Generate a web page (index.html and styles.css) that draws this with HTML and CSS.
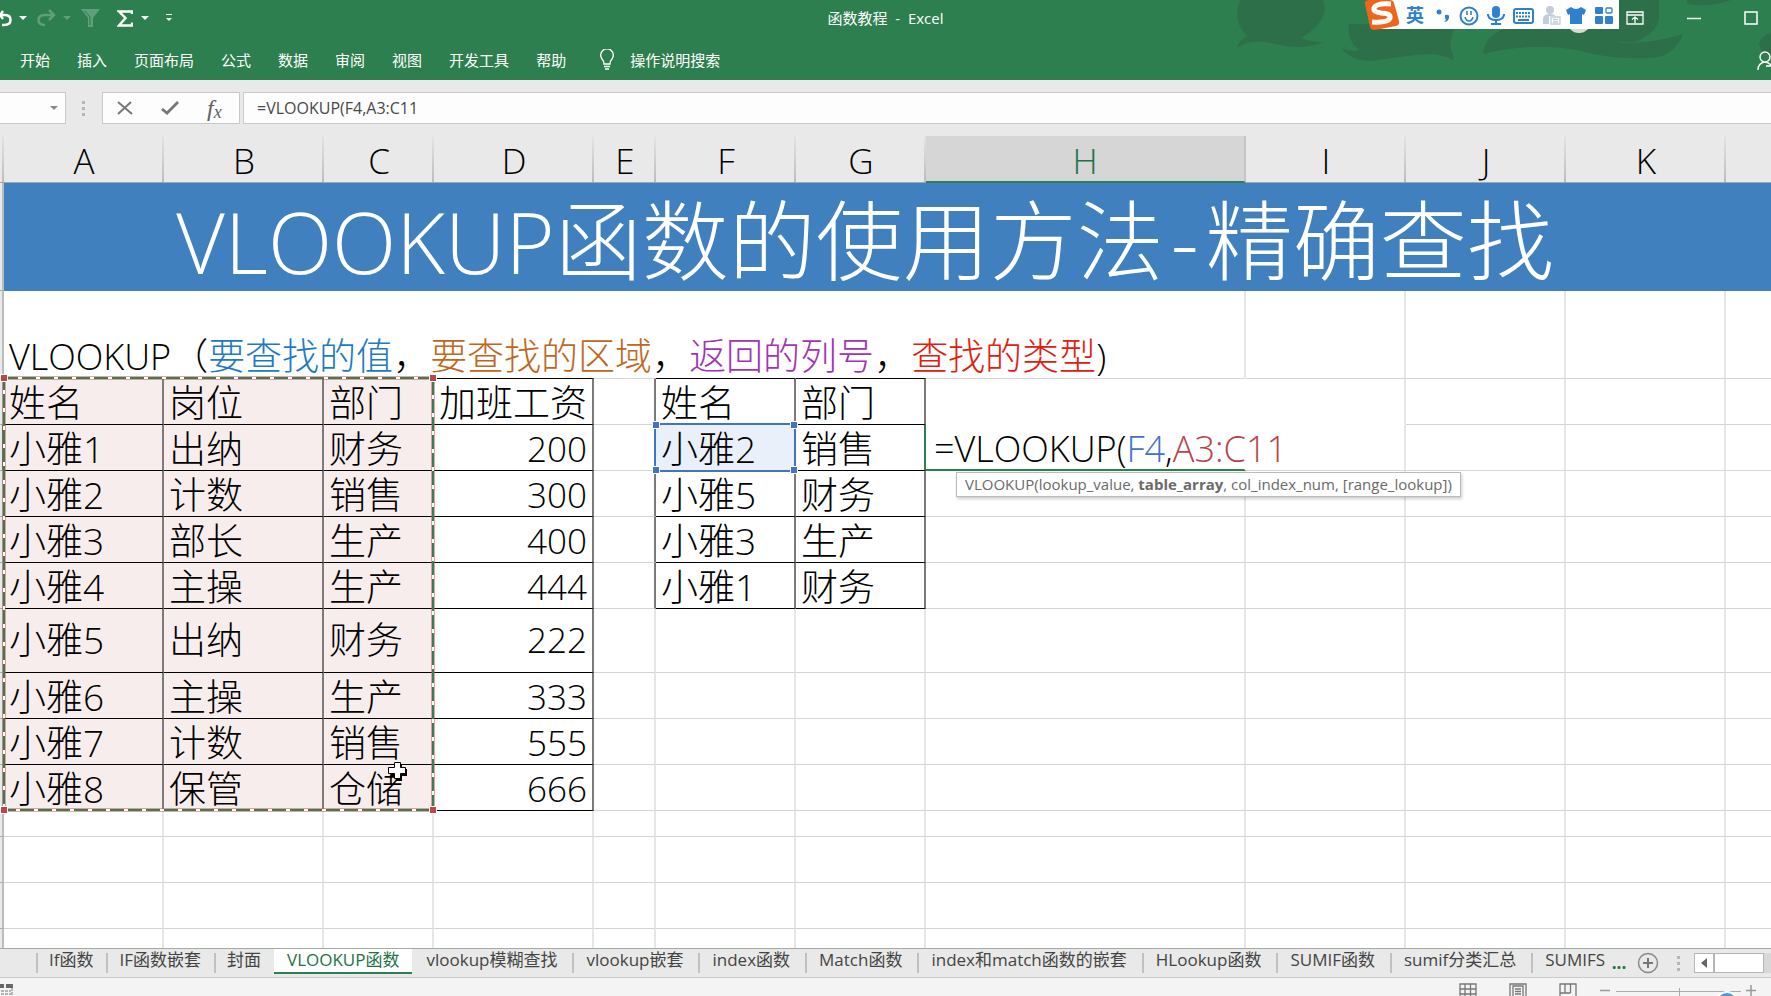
FILE: index.html
```
<!DOCTYPE html>
<html lang="zh-CN">
<head>
<meta charset="utf-8">
<title>函数教程 - Excel</title>
<link rel="stylesheet" href="styles.css">
</head>
<body>
<header class="top">
  <svg class="swirls" width="540" height="80" viewBox="0 0 540 80" aria-hidden="true">
    <path d="M10 0C4 10 4 24 16 36Q8 40 6 48Q16 40 36 42Q70 52 92 42Q78 42 70 38Q100 20 92 0Z"/>
    <path d="M118 24C116 34 120 44 128 50Q118 52 111 48Q118 60 140 61Q160 58 185 55Q208 52 222 60V52Q216 50 224 26Z"/>
    <path d="M252 54Q254 34 276 28H418Q412 40 386 43Q420 44 452 34Q444 56 420 58Q380 60 346 50Q300 42 252 54Z"/>
    <path d="M400 0H428V20Q424 34 404 42H360V0Z"/>
    <path d="M540 32Q520 42 534 54L540 56Z"/>
    <path d="M456 0H500Q480 8 456 4Z"/>
  </svg>
  <div class="titlebar">
    <div class="qat">
      <button class="ico" aria-label="撤消"><svg width="12" height="18" viewBox="0 0 12 18"><path d="M0 6H5Q10.500 6 10.500 11T4 16H2M3 2L0 6L3 10" fill="none" stroke="#fff" stroke-width="2.500"/></svg></button>
      <i class="caret c1"></i>
      <button class="ico redo" aria-label="恢复"><svg width="19" height="18" viewBox="0 0 19 18"><path d="M17 6H8Q1.500 6 1.500 11T8 16M12 1L17 6L12 11" fill="none" stroke="#5f9f7a" stroke-width="2.500"/></svg></button>
      <i class="caret dim"></i>
      <button class="ico filter" aria-label="筛选"><svg width="19" height="18" viewBox="0 0 19 18"><path d="M0 0H19L12 9V18H7V9Z" fill="#5f9f7a"/><path d="M4 2L9 8V16" stroke="#2e7f4f" fill="none"/></svg></button>
      <button class="ico sum" aria-label="自动求和"><svg width="16" height="17" viewBox="0 0 16 17"><path d="M15 4V1.500H2L8.500 8L2 15.500H15V12.500" fill="none" stroke="#fff" stroke-width="2.400"/></svg></button>
      <i class="caret c2"></i>
      <button class="ico more" aria-label="自定义快速访问工具栏"><svg width="6" height="8" viewBox="0 0 6 8"><path d="M0 0H6V1H0ZM0 4H6L3 7Z" fill="#fff"/></svg></button>
    </div>
    <div class="doc">函数教程&nbsp; -&nbsp; Excel</div>
    <div class="win">
      <button class="ico" aria-label="功能区显示选项"><svg width="18" height="14" viewBox="0 0 18 14"><path d="M1 1H17V13H1ZM1 4H17M9 12V6M6 8.500L9 6L12 8.500" fill="none" stroke="#fff" stroke-width="1.300"/></svg></button>
      <button class="ico" aria-label="最小化"><svg width="14" height="14" viewBox="0 0 14 14"><path d="M0 7.500H14" stroke="#fff" stroke-width="1.500"/></svg></button>
      <button class="ico" aria-label="最大化"><svg width="14" height="14" viewBox="0 0 14 14"><path d="M1 1H13V13H1Z" fill="none" stroke="#fff" stroke-width="1.500"/></svg></button>
    </div>
  </div>
  <nav class="ribbon">
    <button>开始</button><button>插入</button><button>页面布局</button><button>公式</button><button>数据</button><button>审阅</button><button>视图</button><button>开发工具</button><button>帮助</button>
    <button class="tell"><svg width="16" height="21" viewBox="0 0 16 21"><path d="M5 15Q5 12 3 10A6.300 6.300 0 1 1 13 10Q11 12 11 15ZM5 17.500H11M6 20H10" fill="none" stroke="#fff" stroke-width="1.400"/></svg>操作说明搜索</button>
    <button class="share" aria-label="共享"><svg width="14" height="19" viewBox="0 0 14 19"><circle cx="8" cy="6" r="5" fill="none" stroke="#fff" stroke-width="1.400"/><path d="M1 19Q1 12 8 11Q11 11 14 14M9 15H14" fill="none" stroke="#fff" stroke-width="1.400"/></svg></button>
  </nav>
  <div class="avatar"></div>
  <div class="ime">
    <svg width="256" height="30" viewBox="0 0 256 30" aria-hidden="true">
      <path d="M8 0H256V29H8Z" fill="#fff"/>
      <path d="M2 4Q1 1 5 0H27Q30 0 31 3L36 21Q37 25 33 26L12 30Q8 30 7 27Z" fill="#ee651b"/>
      <path d="M28 4Q13 3 11 8Q10 12 18 13Q28 13 27 18Q25 23 9 22" fill="none" stroke="#fff" stroke-width="5"/>
      <g fill="#2f81cf">
        <circle cx="76" cy="12" r="2.500"/><path d="M82 15Q87 14 86 18Q85 22 81 22Q84 20 82 18Z"/>
        <rect x="129" y="6" width="8" height="12" rx="4"/><path d="M125 14V15Q126 20 133 20T141 15V14" fill="none" stroke="#2f81cf" stroke-width="2"/><path d="M132 20H134V23H138V25H128V23H132Z"/>
        <path d="M208 7Q213 11 218 7L223 10L221 15L219 14V24H207V14L205 15L203 10Z"/>
        <rect x="232" y="7" width="8" height="7" rx="1"/><rect x="232" y="16" width="8" height="8" rx="1"/><rect x="242" y="16" width="8" height="8" rx="1"/>
      </g>
      <g fill="none" stroke="#2f81cf" stroke-width="2">
        <circle cx="106" cy="16" r="8.500"/><path d="M102 17Q103 21 106 21T110 17M104 11V15M108 11V15" stroke-width="1.600"/>
        <rect x="151" y="9" width="19" height="14" rx="2"/><path d="M153 13H168M153 16.500H168" stroke-dasharray="2 1"/><path d="M155 20H166"/>
        <rect x="243" y="8" width="6" height="5" rx="1" stroke-width="1.300"/>
      </g>
      <g fill="#c3cddd"><circle cx="187" cy="10" r="4"/><path d="M180 24V18Q181 14 187 14Q192 14 192 16H186V24Z"/><path d="M188 17H197V24H188ZM190 19.500H195M190 22H195" fill="#fff" stroke="#c3cddd" stroke-width="1.300"/></g>
    </svg>
    <b>英</b>
  </div>
</header>

<section class="fbar">
  <div class="namebox"><button aria-label="名称框"><i class="caret gray"></i></button></div>
  <div class="grip"><i></i><i></i><i></i></div>
  <div class="fbtns">
    <button class="ico" aria-label="取消"><svg width="16" height="14" viewBox="0 0 16 14"><path d="M1 1L15 13M14 1L1 13" stroke="#777" stroke-width="2"/></svg></button>
    <button class="ico" aria-label="输入"><svg width="18" height="14" viewBox="0 0 18 14"><path d="M1 8L6 12L17 1" fill="none" stroke="#777" stroke-width="2.800"/></svg></button>
    <button class="fx" aria-label="插入函数">f<sub>x</sub></button>
  </div>
  <input class="formula" aria-label="编辑栏" value="=VLOOKUP(F4,A3:C11">
</section>

<main class="sheet">
<table class="grid">
<colgroup><col class="rh"><col class="w160"><col class="w160"><col class="w110"><col class="w160"><col class="w62"><col class="w140"><col class="w130"><col class="w320"><col class="w160"><col class="w160"><col class="w160"><col></colgroup>
<thead><tr><th></th><th>A</th><th>B</th><th>C</th><th>D</th><th>E</th><th>F</th><th>G</th><th class="on">H</th><th>I</th><th>J</th><th>K</th><th></th></tr></thead>
<tbody>
<tr class="banner"><td class="r"></td><td colspan="11"><span class="lat">VLOOKUP</span>函数的使用方法<span class="dash">-</span>精确查找</td><td></td></tr>
<tr class="syntax"><td class="r"></td><td colspan="8"><span class="lat">VLOOKUP</span>（<span class="blue">要查找的值</span>，<span class="orange">要查找的区域</span>，<span class="purple">返回的列号</span>，<span class="red">查找的类型</span>)</td><td></td><td></td><td></td><td></td></tr>
<tr class="first"><td class="r"></td><td class="b p">姓名</td><td class="b p">岗位</td><td class="b p">部门</td><td class="b">加班工资</td><td class="e"></td><td class="b">姓名</td><td class="b">部门</td><td class="open"></td><td class="open last"></td><td></td><td></td><td></td></tr>
<tr><td class="r act"></td><td class="b p">小雅1</td><td class="b p">出纳</td><td class="b p">财务</td><td class="b n">200</td><td class="e"></td><td class="b ref">小雅2<span class="refbox"><i></i><i></i><i></i><i></i></span></td><td class="b pre">销售</td><td class="edit">=VLOOKUP(<span class="fblue">F4</span>,<span class="fred">A3:C11</span><span class="hint">VLOOKUP(lookup_value, <b>table_array</b>, col_index_num, [range_lookup])</span></td><td></td><td></td><td></td><td></td></tr>
<tr><td class="r"></td><td class="b p">小雅2</td><td class="b p">计数</td><td class="b p">销售</td><td class="b n">300</td><td class="e"></td><td class="b">小雅5</td><td class="b">财务</td><td></td><td></td><td></td><td></td><td></td></tr>
<tr><td class="r"></td><td class="b p">小雅3</td><td class="b p">部长</td><td class="b p">生产</td><td class="b n">400</td><td class="e"></td><td class="b">小雅3</td><td class="b">生产</td><td></td><td></td><td></td><td></td><td></td></tr>
<tr><td class="r"></td><td class="b p">小雅4</td><td class="b p">主操</td><td class="b p">生产</td><td class="b n">444</td><td class="e"></td><td class="b">小雅1</td><td class="b">财务</td><td></td><td></td><td></td><td></td><td></td></tr>
<tr class="tall"><td class="r"></td><td class="b p">小雅5</td><td class="b p">出纳</td><td class="b p">财务</td><td class="b n">222</td><td></td><td></td><td></td><td></td><td></td><td></td><td></td><td></td></tr>
<tr><td class="r"></td><td class="b p">小雅6</td><td class="b p">主操</td><td class="b p">生产</td><td class="b n">333</td><td></td><td></td><td></td><td></td><td></td><td></td><td></td><td></td></tr>
<tr><td class="r"></td><td class="b p">小雅7</td><td class="b p">计数</td><td class="b p">销售</td><td class="b n">555</td><td></td><td></td><td></td><td></td><td></td><td></td><td></td><td></td></tr>
<tr><td class="r"></td><td class="b p">小雅8</td><td class="b p">保管</td><td class="b p">仓储</td><td class="b n">666</td><td></td><td></td><td></td><td></td><td></td><td></td><td></td><td></td></tr>
<tr class="short"><td class="r"></td><td></td><td></td><td></td><td></td><td></td><td></td><td></td><td></td><td></td><td></td><td></td><td></td></tr>
<tr><td class="r"></td><td></td><td></td><td></td><td></td><td></td><td></td><td></td><td></td><td></td><td></td><td></td><td></td></tr>
<tr><td class="r"></td><td></td><td></td><td></td><td></td><td></td><td></td><td></td><td></td><td></td><td></td><td></td><td></td></tr>
<tr><td class="r"></td><td></td><td></td><td></td><td></td><td></td><td></td><td></td><td></td><td></td><td></td><td></td><td></td></tr>
</tbody>
</table>
<div class="marquee">
  <svg width="100%" height="100%"><rect width="100%" height="100%" fill="none" stroke="#c0504d" stroke-width="3"/><rect width="100%" height="100%" fill="none" stroke="#fff" stroke-width="2"/><rect width="100%" height="100%" fill="none" stroke="#3b7d52" stroke-width="2" stroke-dasharray="14 4"/></svg>
  <i></i><i></i><i></i><i></i>
</div>
<svg class="cursor" width="20" height="20" viewBox="0 0 20 20" aria-hidden="true"><path d="M8 2H14V7H19V14H14V19H8V14H3V7H8Z" fill="#000"/><path d="M6.500 .5H12.500V5.500H17.500V11.500H12.500V16.500H6.500V11.500H.5V5.500H6.500Z" fill="#fff" stroke="#000"/></svg>
</main>

<footer>
  <div class="tabbar">
    <div class="tabs">
      <button>If函数</button><button>IF函数嵌套</button><button>封面</button><button class="cur">VLOOKUP函数</button><button>vlookup模糊查找</button><button>vlookup嵌套</button><button>index函数</button><button>Match函数</button><button>index和match函数的嵌套</button><button>HLookup函数</button><button>SUMIF函数</button><button>sumif分类汇总</button><button>SUMIFS</button>
    </div>
    <button class="dots">...</button>
    <button class="ico add" aria-label="新工作表"><svg width="22" height="22" viewBox="0 0 22 22"><circle cx="11" cy="11" r="9.500" fill="none" stroke="#8a8a8a" stroke-width="1.500"/><path d="M11 6V16M6 11H16" stroke="#777" stroke-width="2"/></svg></button>
    <div class="grip"><i></i><i></i><i></i></div>
    <div class="scroll"><button aria-label="向左滚动"><svg width="6" height="10" viewBox="0 0 6 10"><path d="M6 0V10L0 5Z" fill="#666"/></svg></button><span></span></div>
  </div>
  <div class="status">
    <svg width="13" height="12" viewBox="0 0 13 12" aria-hidden="true"><path d="M0 0H4V4H0ZM6 0H13V4H6Z" fill="#666"/><path d="M12 0V12M1 7H11M1 10H11" stroke="#777" stroke-dasharray="3 1"/></svg>
    <div class="views">
      <button class="ico" aria-label="普通"><svg width="18" height="13" viewBox="0 0 18 13"><path d="M1 13V1H17V13M1 6H17M1 11H17M6 1V13M11.500 1V13" fill="none" stroke="#777" stroke-width="1.300"/></svg></button>
      <button class="ico" aria-label="页面布局"><svg width="18" height="13" viewBox="0 0 18 13"><path d="M1 13V1H17V13M4 13V3H14V13M6 6H12M6 8.500H12M6 11H12" fill="none" stroke="#777" stroke-width="1.300"/></svg></button>
      <button class="ico" aria-label="分页预览"><svg width="18" height="13" viewBox="0 0 18 13"><path d="M1 13V1H17V13M6 1V10M11.500 1V10M1 10H11.500" fill="none" stroke="#777" stroke-width="1.300"/></svg></button>
    </div>
    <div class="zoom">
      <svg width="158" height="13" viewBox="0 0 158 13" aria-hidden="true"><path d="M0 7.500H10M146 7.500H156M151 2V13" stroke="#999" stroke-width="1.500"/><path d="M16 8.500H141M79.500 5V13" stroke="#aaa" stroke-width="1"/><circle cx="127" cy="20" r="12" fill="#fff"/><circle cx="127" cy="20" r="10" fill="#4f93e6"/></svg>
    </div>
  </div>
</footer>
</body>
</html>
```
FILE: styles.css
```
* { box-sizing: border-box; }
body {
  margin: 0;
  height: 100vh;
  display: flex;
  flex-direction: column;
  overflow: hidden;
  background: #e9e9e9;
  font-family: "Open Sans", "Noto Sans CJK SC", sans-serif;
  color: #000;
}
button {
  border: 0;
  padding: 0;
  margin: 0;
  background: none;
  font: inherit;
  color: inherit;
  white-space: nowrap;
}
svg { display: block; }
.ico { display: flex; align-items: center; }

/* title bar and ribbon */
.top {
  position: relative;
  flex: none;
  background: #2e7f4f;
  color: #fff;
  font-size: 15px;
}
.swirls { position: absolute; right: 0; top: 0; fill: #2d6f49; }
.titlebar {
  position: relative;
  display: grid;
  grid-template-columns: 1fr auto 1fr;
  align-items: center;
  height: 36px;
}
.qat { display: flex; align-items: center; }
.caret {
  width: 0;
  height: 0;
  border: 4px solid transparent;
  border-top-color: #fff;
  border-bottom: 0;
}
.c1 { margin-left: 7px; }
.c2 { margin-left: 8px; }
.redo { margin-left: 10px; }
.dim { margin-left: 7px; border-top-color: #5f9f7a; }
.filter { margin-left: 10px; }
.sum { margin-left: 17px; }
.more { margin-left: 17px; }
.doc { line-height: 36px; }
.win { display: flex; justify-content: flex-end; gap: 43px; padding-right: 13px; }
.ribbon {
  position: relative;
  display: flex;
  align-items: center;
  gap: 27px;
  height: 44px;
  padding: 2px 0 0 20px;
}
.tell { display: flex; align-items: center; gap: 15px; margin-left: 6px; }
.share { margin-left: auto; padding-top: 2px; }
.ime { position: absolute; top: 0; right: 152px; }
.ime b {
  position: absolute;
  left: 43px;
  top: 3px;
  font-size: 18px;
  line-height: 25px;
  color: #2f81cf;
}
.avatar {
  position: absolute;
  top: 9px;
  right: 180px;
  width: 24px;
  height: 24px;
  border-radius: 12px;
  background: #d8dcd8;
}

/* formula bar */
.fbar {
  display: flex;
  flex: none;
  height: 56px;
  padding: 12px 0;
}
.namebox, .fbtns, .formula {
  border: 1px solid #c9c9c9;
  background: #fdfdfd;
}
.namebox { display: flex; width: 66px; border-left: 0; justify-content: flex-end; align-items: center; padding-right: 7px; }
.gray { display: block; border-top-color: #888; }
.grip { display: flex; flex-direction: column; justify-content: center; gap: 3px; }
.grip i { width: 3px; height: 3px; background: #b5b5b5; }
.fbar .grip { margin: 0 17px 0 16px; }
.fbtns { display: flex; align-items: center; gap: 28px; width: 138px; padding-left: 14px; }
.fx { font: italic 24px/24px "Liberation Serif", serif; color: #606060; }
.fx sub { font-size: 18px; line-height: 10px; vertical-align: -2px; }
.formula {
  flex: 1;
  min-width: 0;
  margin-left: 3px;
  padding: 0 13px;
  border-right: 0;
  border-radius: 0;
  font: 16px "Open Sans", sans-serif;
  color: #484848;
}

/* grid */
.sheet { position: relative; flex: 1; min-height: 0; overflow: hidden; background: #fff; }
.grid {
  width: 100%;
  table-layout: fixed;
  border-collapse: separate;
  border-spacing: 0;
  font-size: 37px;
  line-height: 42px;
  font-weight: 300;
}
.rh { width: 4px; }
.w62 { width: 62px; }
.w110 { width: 110px; }
.w130 { width: 130px; }
.w140 { width: 140px; }
.w160 { width: 160px; }
.w320 { width: 320px; }
.grid th {
  height: 47px;
  padding: 3px 0 0;
  font-size: 35px;
  font-weight: 300;
  background: linear-gradient(#e4e4e4, #bdbdbd) right / 2px 100% no-repeat #e9e9e9;
  border-bottom: 1px solid #9aa8b4;
}
.grid th:last-child { background: #e9e9e9; }
.grid th.on { line-height: 41px; background: #d6d6d6; color: #217346; border-bottom: 2px solid #2e7f5a; border-right: 2px solid #c4c4c4; }
.grid td {
  height: 46px;
  padding: 3px 5px 0;
  white-space: nowrap;
  border-right: 2px solid #e6e6e6;
  border-bottom: 1px solid #d4d4d4;
}
.grid td:last-child { border-right: 0; }
.grid td.r { padding: 0; background: #e9e9e9; border-right: 2px solid #bcbcbc; border-bottom-color: #aaa; }
.grid td.act { border-right-color: #3b7d52; }
.grid .banner td:not(.r) {
  height: 108px;
  padding: 8px 0 0;
  text-align: center;
  font-size: 87px;
  line-height: 96px;
  color: #fff;
  background: #4080be;
  border: 0;
}
.banner .lat { font-size: 84px; }
.dash { padding: 0 7px; }
.grid .syntax td { height: 87px; vertical-align: bottom; border-bottom: 0; }
.syntax .lat { font-size: 36px; }
.blue { color: #1f7ac4; }
.orange { color: #c0671d; }
.purple { color: #a233b5; }
.red { color: #e0200f; }
.grid .first td { height: 47px; border-top: 1px solid #d4d4d4; }
.grid td.b { border-right-color: #7f7a7a; border-bottom-color: #000; }
.grid .first td.b { border-top-color: #000; }
.grid td.e { border-right-color: #7f7a7a; }
.grid td.pre { border-right-color: #2e7f4f; }
.grid td.p { background: #f8eded; }
.grid td.n { text-align: right; font-size: 35px; }
.grid td.open { border-right-color: transparent; border-bottom-color: transparent; }
.grid td.open.last { border-right-color: #e6e6e6; }
.grid .tall td { height: 64px; padding: 0 5px 1px; }
.grid .short td { height: 26px; }
.grid td.ref { position: relative; background: #e9f0f9; }
.refbox { position: absolute; inset: -2px; border: 2px solid #4472c4; }
.refbox i, .marquee i { position: absolute; width: 6px; height: 6px; background: #4472c4; outline: 1px solid #fff; }
.refbox i:nth-of-type(1) { left: -3px; top: -3px; }
.refbox i:nth-of-type(2) { right: -3px; top: -3px; }
.refbox i:nth-of-type(3) { left: -3px; bottom: -3px; }
.refbox i:nth-of-type(4) { right: -3px; bottom: -3px; }
.grid td.edit {
  position: relative;
  padding-left: 8px;
  font-size: 36px;
  line-height: 41px;
  border-bottom: 2px solid #2e7f4f;
  border-right-color: transparent;
}
.fblue { color: #4472c4; }
.fred { color: #b8434a; }
.hint {
  position: absolute;
  left: 30px;
  top: 47px;
  padding: 0 8px 1px;
  border: 1px solid #bbb;
  background: #fff;
  box-shadow: 1px 2px 3px rgba(0, 0, 0, .2);
  font-size: 15px;
  line-height: 22px;
  font-weight: 400;
  color: #6a6a6a;
}
.marquee { position: absolute; left: 4px; top: 242px; width: 429px; height: 432px; }
.marquee svg { overflow: visible; }
.marquee i { background: #c0444c; }
.marquee i:nth-of-type(1) { left: -3px; top: -3px; }
.marquee i:nth-of-type(2) { right: -3px; top: -3px; }
.marquee i:nth-of-type(3) { left: -3px; bottom: -3px; }
.marquee i:nth-of-type(4) { right: -3px; bottom: -3px; }
.cursor { position: absolute; left: 388px; top: 626px; }

/* sheet tabs and status bar */
footer { flex: none; }
.tabbar {
  display: flex;
  height: 30px;
  padding-left: 36px;
  border-top: 1px solid #a3aba3;
  border-bottom: 1px solid #c8c8c8;
  background: #e9e9e9;
  font-size: 17px;
  color: #444;
}
.tabs { display: flex; flex: 1; min-width: 0; overflow: hidden; }
.tabs button {
  flex: none;
  position: relative;
  height: 25px;
  line-height: 22px;
  padding: 0 13px 3px;
}
.tabs button::before {
  content: "";
  position: absolute;
  left: 0;
  top: 4px;
  width: 2px;
  height: 20px;
  background: #c0c0c0;
}
.tabs .cur { background: #fff; color: #217346; border-bottom: 2px solid #2e7f4f; padding-bottom: 1px; }
.tabs .cur ~ button { padding-left: 14px; padding-right: 15px; }
.tabs .cur::before, .tabs .cur + button::before { display: none; }
.dots { width: 28px; color: #217346; font-weight: 700; line-height: 22px; }
.add { margin: 3px 18px 0 4px; height: 22px; }
.tabbar .grip { margin-right: 14px; }
.scroll { display: flex; width: 77px; height: 20px; margin-top: 4px; background: #d8d8d8; }
.scroll button { display: flex; align-items: center; justify-content: center; width: 20px; border: 1px solid #b5b5b5; background: #fff; }
.scroll span { width: 50px; border: 1px solid #b5b5b5; background: #fff; }
.status { display: flex; align-items: flex-end; height: 18px; background: #f4f4f4; overflow: hidden; }
.views { display: flex; gap: 32px; margin-left: auto; }
.zoom { margin: 0 13px 0 23px; }
```
